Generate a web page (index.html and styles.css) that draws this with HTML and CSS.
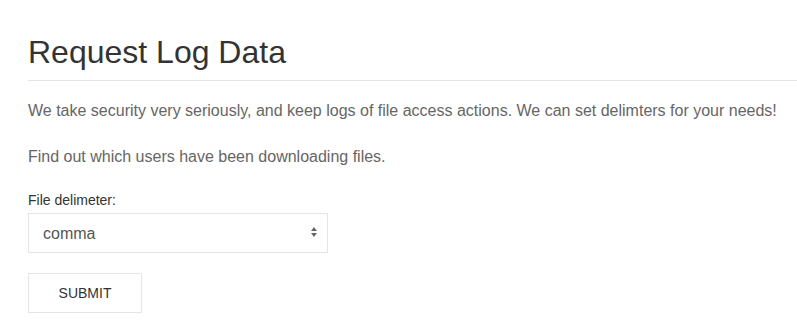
FILE: index.html
```html
<!DOCTYPE html>
<html lang="en">
<head>
    <meta charset="UTF-8">
    <meta name="viewport" content="width=device-width, initial-scale=1.0">
    <title>Request Log Data</title>
    <link rel="stylesheet" href="styles.css">
</head>
<body>
    <div class="container">
        <h1 class="page-title">Request Log Data</h1>

        <p class="intro">We take security very seriously, and keep logs of file access actions. We can set delimters for your needs!</p>
        <p class="intro">Find out which users have been downloading files.</p>

        <form class="log-form">
            <label for="delimiter" class="field-label">File delimeter:</label>
            <div class="select-wrap">
                <select id="delimiter" class="field-select">
                    <option>comma</option>
                    <option>tab</option>
                    <option>pipe</option>
                </select>
            </div>
            <button type="button" class="btn">SUBMIT</button>
        </form>
    </div>
</body>
</html>
```

FILE: styles.css
```css
body {
    margin: 0;
    font-family: "Liberation Sans", Arial, sans-serif;
    background-color: #fff;
    color: #333;
}
.container {
    padding: 0 0 0 28px;
}
.page-title {
    font-size: 32px;
    font-weight: normal;
    line-height: 36px;
    color: #333;
    margin: 34px 0 0;
    padding-bottom: 10px;
    border-bottom: 1px solid #e5e5e5;
}
.intro {
    font-size: 16px;
    line-height: 24px;
    color: #666;
    margin: 0 0 22px;
}
.page-title + .intro {
    margin-top: 18px;
}
.log-form {
    display: flex;
    flex-direction: column;
    align-items: flex-start;
}
.field-label {
    font-size: 14px;
    line-height: 20px;
    color: #333;
    margin-top: -1px;
    margin-bottom: 3px;
}
.select-wrap {
    position: relative;
    width: 300px;
}
.select-wrap::before,
.select-wrap::after {
    content: "";
    position: absolute;
    right: 11px;
    width: 0;
    height: 0;
    border-left: 3px solid transparent;
    border-right: 3px solid transparent;
    pointer-events: none;
}
.select-wrap::before {
    top: 14px;
    border-bottom: 4px solid #666;
}
.select-wrap::after {
    top: 20px;
    border-top: 4px solid #666;
}
.field-select {
    -webkit-appearance: none;
    appearance: none;
    width: 300px;
    height: 40px;
    box-sizing: border-box;
    border: 1px solid #e5e5e5;
    border-radius: 0;
    background: #fff;
    padding: 0 14px;
    font-family: inherit;
    font-size: 16px;
    color: #555;
}
.btn {
    margin-top: 20px;
    width: 114px;
    height: 40px;
    box-sizing: border-box;
    border: 1px solid #e5e5e5;
    background: #fff;
    border-radius: 0;
    font-family: inherit;
    font-size: 14px;
    color: #333;
    cursor: pointer;
}
```
